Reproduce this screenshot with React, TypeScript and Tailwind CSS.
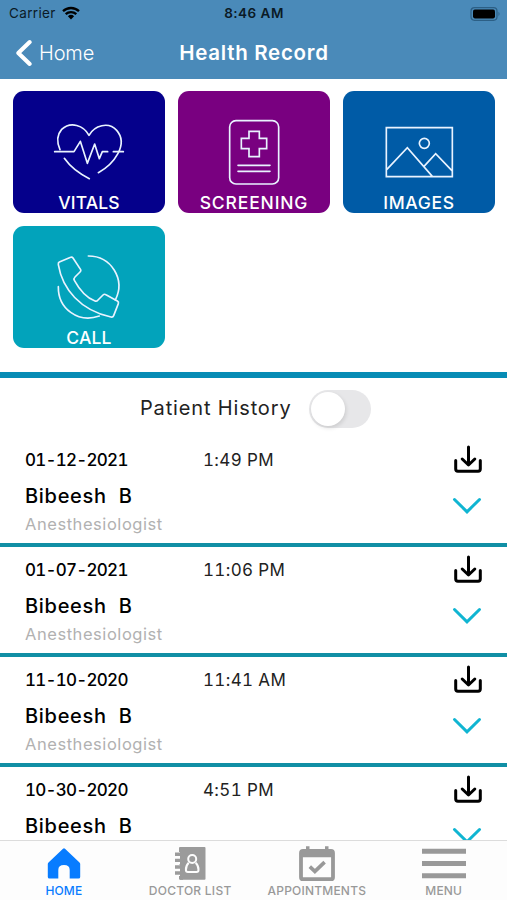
import type { ReactNode } from "react"

interface Visit {
  date: string
  time: string
  doctor: string
  specialty: string
}

interface TileProps {
  label: string
  color: string
  labelClass: string
  viewBox: string
  children: ReactNode
}

const visits: Visit[] = [
  { date: "01-12-2021", time: "1:49 PM", doctor: "Bibeesh  B", specialty: "Anesthesiologist" },
  { date: "01-07-2021", time: "11:06 PM", doctor: "Bibeesh  B", specialty: "Anesthesiologist" },
  { date: "11-10-2020", time: "11:41 AM", doctor: "Bibeesh  B", specialty: "Anesthesiologist" },
]

const lastVisit = { date: "10-30-2020", time: "4:51 PM", doctor: "Bibeesh  B" }

function StatusBar() {
  return (
    <div className="grid h-[27px] grid-cols-3 items-center pt-px text-[13.5px] leading-none text-[#0b1a26]">
      <div className="flex items-center gap-[6px] pl-[9px]">
        <span className="tracking-[0.35px]">Carrier</span>
        <svg width="18" height="14" viewBox="0 0 18 14" className="-mt-0.5">
          <path d="M9 13.5 5.9 10.3a4.5 4.5 0 0 1 6.2 0Z" fill="#000" />
          <path d="M1 5.2a11.6 11.6 0 0 1 16 0M3.7 8.2a7.7 7.7 0 0 1 10.6 0" fill="none" stroke="#000" strokeWidth="2.3" />
        </svg>
      </div>
      <span className="pl-px text-center font-semibold tracking-[0.5px]">8:46 AM</span>
      <div className="flex justify-end pr-[6px]">
        <svg width="31" height="14" viewBox="0 0 31 14">
          <rect x="1" y="0.7" width="26" height="12.6" rx="3.5" fill="none" stroke="#2c5f85" strokeWidth="1.2" />
          <rect x="3" y="2.6" width="22" height="8.8" rx="1.8" fill="#000" />
          <path d="M28.5 4.8q2 2.2 0 4.4Z" fill="#2c5f85" />
        </svg>
      </div>
    </div>
  )
}

function NavBar() {
  return (
    <div className="grid h-[52px] grid-cols-3 items-center text-white">
      <div className="flex items-center gap-[6px] pl-[15px]">
        <svg width="18" height="28" viewBox="0 0 17 27">
          <path d="M14 3 3 13.5 14 24" fill="none" stroke="#fff" strokeWidth="4" strokeLinecap="round" strokeLinejoin="round" />
        </svg>
        <span className="text-[20px] font-light tracking-[-0.15px]">Home</span>
      </div>
      <span className="pl-px text-center text-[20.5px] font-semibold tracking-[0.7px] whitespace-nowrap">Health Record</span>
    </div>
  )
}

function Tile({ label, color, labelClass, viewBox, children }: TileProps) {
  return (
    <div className={`flex h-[122px] w-[152px] flex-col items-center overflow-hidden rounded-[11px] ${color}`}>
      <svg
        className="h-[101px] w-[152px] shrink-0"
        viewBox={viewBox}
        fill="none"
        stroke="#e9f3ff"
        strokeWidth="5"
        strokeLinecap="round"
        strokeLinejoin="round"
      >
        {children}
      </svg>
      <span className={`mt-px text-[17.5px] leading-5 font-medium text-white ${labelClass}`}>{label}</span>
    </div>
  )
}

function DownloadIcon() {
  return (
    <svg
      className="shrink-0"
      width="30"
      height="29"
      viewBox="0 0 30 29"
      fill="none"
      stroke="#000"
      strokeLinecap="round"
      strokeLinejoin="round"
    >
      <path d="M2.7 15.5V24q0 2.2 2.2 2.2h20.2q2.2 0 2.2-2.2v-8.5" strokeWidth="3" />
      <path d="M15.5 2v17M9.2 14l6.3 6 6.3-6" strokeWidth="3" />
    </svg>
  )
}

function ChevronIcon() {
  return (
    <svg className="mt-[22px] mr-px shrink-0" width="30" height="20" viewBox="0 0 30 20">
      <path d="m2.5 3.5 12.5 12.3 12.5-12.3" fill="none" stroke="#10b5d2" strokeWidth="3" strokeLinecap="round" />
    </svg>
  )
}

function VisitHeading({ date, time, doctor }: Omit<Visit, "specialty">) {
  return (
    <>
      <div className="flex h-6 items-center text-[17px] tabular-nums">
        <span className="w-[178px] font-medium tracking-[-0.75px] text-black">{date}</span>
        <span className="tracking-[0.35px] text-[#222]">{time}</span>
      </div>
      <div className="mt-[10px] h-[26px] text-[20px] leading-[26px] font-medium tracking-[0.7px] whitespace-pre text-black">
        {doctor}
      </div>
    </>
  )
}

function VisitRow({ visit }: { visit: Visit }) {
  return (
    <div className="flex h-[110px] shrink-0 justify-between border-b-4 border-[#118fa5] pr-6 pl-[25px]">
      <div className="pt-[11.5px]">
        <VisitHeading date={visit.date} time={visit.time} doctor={visit.doctor} />
        <div className="mt-[3px] text-[16.5px] leading-6 tracking-[0.55px] text-[#b1b1b1]">{visit.specialty}</div>
      </div>
      <div className="flex flex-col items-center pt-2">
        <DownloadIcon />
        <ChevronIcon />
      </div>
    </div>
  )
}

function TabBar() {
  return (
    <nav className="grid h-[60px] shrink-0 grid-cols-4 border-t border-[#dcdcdc] bg-[#fdfdfd] text-[12px] leading-[14px] font-medium text-[#999]">
      <div className="flex flex-col items-center pl-px text-[#087cff]">
        <svg width="50" height="43" viewBox="0 0 50 43">
          <path
            d="M24 7.7q1-.8 2 0l14.5 13.7q.7.7.7 1.7v12.8q0 1.7-1.7 1.7h-8.8V29q0-5-5.7-5t-5.7 5v8.6h-8.8q-1.7 0-1.7-1.7V23.1q0-1 .7-1.7Z"
            fill="currentColor"
          />
        </svg>
        <span className="tracking-[0.1px]">HOME</span>
      </div>
      <div className="flex flex-col items-center">
        <svg width="50" height="43" viewBox="0 0 50 43">
          <path d="M15 6h24.5q1 0 1 1v30.8q0 1-1 1H15q-1 0-1-1V7q0-1 1-1Z" fill="#9b9b9b" />
          <path d="M10 14h6M10 20h6M10 26.5h6M10 32h6" stroke="#fdfdfd" strokeWidth="6" />
          <path d="M10 13.3h5.5M10 19.4h5.5M10 26h5.5M10 32h5.5" stroke="#9b9b9b" strokeWidth="3.4" />
          <path d="M15 6h3v32.8h-3z" fill="#9b9b9b" />
          <circle cx="27.2" cy="18" r="4" fill="none" stroke="#fdfdfd" strokeWidth="2" />
          <path d="M23.7 21.8q-3 3-2.8 7.3 0 2 2 2h8.6q2 0 2-2 .2-4.3-2.8-7.3" fill="none" stroke="#fdfdfd" strokeWidth="2" />
        </svg>
        <span className="tracking-[0.25px]">DOCTOR LIST</span>
      </div>
      <div className="flex flex-col items-center">
        <svg width="50" height="43" viewBox="0 0 50 43">
          <path d="M14 5.2h3.5v5H14zM33 5.2h3.5v5H33z" fill="#999" />
          <rect x="9" y="10" width="32" height="28.2" rx="2" fill="none" stroke="#999" strokeWidth="3.8" />
          <path d="M8 9h34v7.3H8z" fill="#999" />
          <path d="m17.8 25.6 5.1 4.8 9.7-9.3" fill="none" stroke="#999" strokeWidth="3.6" />
        </svg>
        <span className="tracking-[0.2px]">APPOINTMENTS</span>
      </div>
      <div className="flex flex-col items-center">
        <svg width="50" height="43" viewBox="0 0 50 43">
          <path d="M3 10.2h44M3 22.6h44M3 34.8h44" stroke="#999" strokeWidth="5" />
        </svg>
        <span className="tracking-[0.1px]">MENU</span>
      </div>
    </nav>
  )
}

export default function App() {
  return (
    <div className="flex h-[900px] w-[507px] flex-col overflow-hidden bg-white font-[Inter,sans-serif]">
      <header className="shrink-0 bg-[#4a8ab9]">
        <StatusBar />
        <NavBar />
      </header>

      <section className="grid shrink-0 grid-cols-[repeat(3,152px)] gap-x-[13px] gap-y-[12.5px] px-[13px] pt-3 pb-[24.5px]">
        <Tile label="VITALS" color="bg-[#05008b]" labelClass="tracking-[0.1px]" viewBox="39 18 456 303">
          <path d="M180 194q-16-37 5-61c27-25 66-12 82 18 16-30 59-42 83-15 37 42-9 102-55 127M193 220q26 37 75 61" />
          <path d="M164 200h58l19-31 21 66 22-58 14 44 9-21h16M340 200h30" />
        </Tile>
        <Tile label="SCREENING" color="bg-[#790080]" labelClass="tracking-[0.85px]" viewBox="24 18 456 303">
          <rect x="179" y="107" width="147" height="190" rx="19" />
          <path d="M237 139h31v21h22v31h-22v24h-31v-24h-23v-31h23ZM204 241h96M204 259h96" strokeLinejoin="miter" />
        </Tile>
        <Tile label="IMAGES" color="bg-[#005ba6]" labelClass="tracking-[0.65px]" viewBox="24 18 456 303">
          <path d="M154 128h198v147H154ZM155 254l62-66 75 86M267 244l35-38 48 50" strokeLinejoin="miter" />
          <circle cx="268" cy="175" r="15" />
        </Tile>
        <Tile label="CALL" color="bg-[#02a3bb]" labelClass="tracking-[0.2px]" viewBox="40 17 456 303">
          <path d="M179 125l34-14q4-2 7 2l23 35q2 4-2 7l-15 15q-5 5-2 10 27 49 62 62 5 2 9-3l15-15q4-4 9-1l34 19q5 3 3 8l-14 36q-2 5-8 4c-92-20-146-84-158-157q-1-6 3-8Z" />
          <path d="M266 107c69 0 112 70 81 132M176 199c-1 66 59 110 123 88" />
        </Tile>
      </section>

      <main className="flex min-h-0 flex-1 flex-col overflow-hidden border-t-[6px] border-[#078cb5]">
        <div className="flex h-[59px] shrink-0 items-center pt-[3px] pl-[140px]">
          <span className="-mt-[3px] w-[169px] text-[20px] tracking-[0.85px] whitespace-nowrap text-[#222]">Patient History</span>
          <div className="h-[38px] w-[62px] rounded-full bg-[#e7e7e9] p-[2px]">
            <div className="size-[34px] rounded-full bg-white shadow-[1px_2px_4px_rgba(0,0,0,0.12)]" />
          </div>
        </div>
        {visits.map((visit) => (
          <VisitRow key={visit.date} visit={visit} />
        ))}
        <div className="flex min-h-0 flex-1 justify-between overflow-hidden pr-6 pl-[25px]">
          <div className="pt-[11.5px]">
            <VisitHeading {...lastVisit} />
          </div>
          <div className="flex flex-col items-center pt-2">
            <DownloadIcon />
            <ChevronIcon />
          </div>
        </div>
      </main>

      <TabBar />
    </div>
  )
}
